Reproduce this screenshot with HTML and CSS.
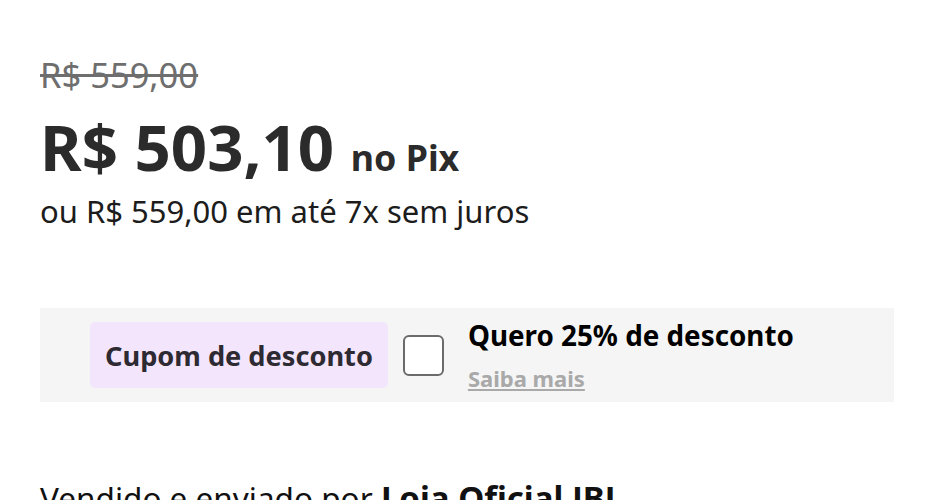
FILE: index.html
```html
<!DOCTYPE html>
<html lang="pt-BR">

<head>
  <meta charset="UTF-8">
  <meta name="viewport" content="width=device-width, initial-scale=1.0">
  <title>Preço</title>
  <link rel="stylesheet" href="styles.css">
</head>

<body>
  <div class="price-block">
    <div class="old-price">R$ 559,00</div>
    <div class="pix-price">R$ 503,10 <span class="pix-label">no Pix</span></div>
    <div class="installments">ou R$ 559,00 em até 7x sem juros</div>
  </div>

  <div class="coupon-box">
    <div class="coupon-tag">Cupom de desconto</div>
    <label class="coupon-check">
      <span class="checkbox"></span>
      <span class="coupon-text">
        <span class="coupon-title">Quero 25% de desconto</span>
        <a class="coupon-link" href="#">Saiba mais</a>
      </span>
    </label>
  </div>

  <div class="seller">Vendido e enviado por <strong>Loja Oficial JBL</strong></div>
</body>

</html>
```

FILE: styles.css
```css
body {
  font-family: 'Noto Sans', sans-serif;
  background-color: #fff;
  color: #222;
  margin: 0;
  padding: 0 40px;
}

.price-block {
  padding-top: 55px;
}

.old-price {
  font-size: 34.5px;
  line-height: 40px;
  color: #6e6e6e;
  text-decoration: line-through;
}

.pix-price {
  margin-top: 12px;
  font-size: 63.5px;
  font-weight: bold;
  line-height: 80px;
  color: #2b2b2b;
}

.pix-label {
  font-size: 35.8px;
  line-height: 1;
}

.installments {
  margin-top: 4px;
  font-size: 31px;
  line-height: 40px;
  color: #1c1c1c;
}

.coupon-box {
  margin-top: 77px;
  width: 854px;
  height: 94px;
  box-sizing: border-box;
  background-color: #f5f5f5;
  display: flex;
  align-items: center;
  padding-left: 50px;
  gap: 15px;
}

.coupon-tag {
  background-color: #f3e5fc;
  border-radius: 5px;
  padding: 0 15px;
  height: 66px;
  display: flex;
  align-items: center;
  font-size: 27.2px;
  font-weight: bold;
  color: #2d2a32;
}

.coupon-check {
  display: flex;
  align-items: center;
  gap: 24px;
}

.checkbox {
  width: 37px;
  height: 37px;
  border: 2px solid #6b6b6b;
  border-radius: 6px;
  background-color: #fff;
}

.coupon-text {
  display: flex;
  flex-direction: column;
  gap: 10px;
}

.coupon-title {
  font-size: 27.8px;
  font-weight: bold;
  color: #000;
  line-height: 36px;
}

.coupon-link {
  font-size: 22px;
  font-weight: bold;
  color: #a9a9a9;
  line-height: 30px;
}

.seller {
  margin-top: 76px;
  font-size: 31.5px;
  line-height: 40px;
  color: #111;
}

.seller strong {
  font-size: 33px;
}
```
